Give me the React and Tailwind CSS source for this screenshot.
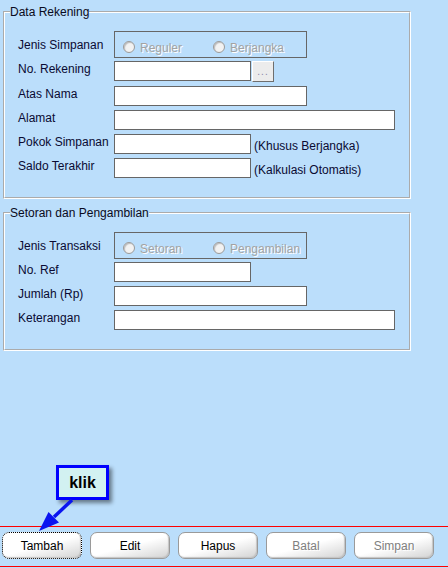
import React from 'react';

const labelCls = 'w-[96px] shrink-0 leading-[16px] text-[#0a0a32]';
const inputCls = 'h-[20px] shrink-0 border border-[#666] bg-white px-[2px] text-[12px] outline-none';

function Radio({ label, wide }) {
  return (
    <div className={`flex items-start gap-[5px] ${wide ? 'w-[90px]' : ''}`}>
      <span className="mt-[1px] h-[12px] w-[12px] shrink-0 rounded-full border border-[#9a9a9a] bg-[#f2f2f2] shadow-[inset_1px_1px_1px_#bdbdbd]" />
      <span className="leading-[16px] text-[#a3a3a3] [text-shadow:1px_1px_0_#fff]">{label}</span>
    </div>
  );
}

function RadioRow({ label, a, b }) {
  return (
    <div className="flex h-[27px] items-start">
      <span className={`${labelCls} pt-[6px]`}>{label}</span>
      <div className="flex h-[27px] w-[193px] items-start border border-[#666] pl-[8px] pt-[8px]">
        <Radio label={a} wide />
        <Radio label={b} />
      </div>
    </div>
  );
}

function Field({ label, width, hint, browse, first }) {
  return (
    <div className={`flex items-start ${first ? 'mt-[3px]' : 'mt-[4px]'}`}>
      <span className={labelCls}>{label}</span>
      <input className={inputCls} style={{ width }} />
      {browse && (
        <button className="ml-px h-[21px] w-[22px] border border-t-white border-l-white border-r-[#6e6e6e] border-b-[#6e6e6e] bg-[#ececec] text-[10px] leading-[14px] tracking-[1px] text-[#8a86a8]">
          ...
        </button>
      )}
      {hint && <span className="ml-[3px] pt-[4px] leading-[16px] text-[#0a0a32]">{hint}</span>}
    </div>
  );
}

function Group({ title, className, children }) {
  return (
    <fieldset
      className={`ml-[3px] w-[408px] border-2 border-white [border-style:groove] px-[5px] pt-[12px] pb-[19px] ${className}`}
    >
      <legend className="px-0 leading-[14px] text-[#0a0a20]">{title}</legend>
      <div className="pl-[8px]">{children}</div>
    </fieldset>
  );
}

function Btn({ children, disabled, focused }) {
  return (
    <button
      className={`h-[27px] w-[80px] rounded-[7px] border bg-[linear-gradient(165deg,#ffffff_50%,#d2d2d2)] text-[12px] shadow-[inset_-1px_-1px_1px_#c4c4c4] ${
        focused ? 'border-dotted border-black' : 'border-[#9a9a9a]'
      } ${disabled ? 'text-[#808080] [text-shadow:1px_1px_0_#fff]' : 'text-black'}`}
    >
      {children}
    </button>
  );
}

export default function App() {
  return (
    <div className="relative flex h-[568px] w-[448px] flex-col overflow-hidden bg-[#bbdefb] font-['Liberation_Sans',Arial,sans-serif] text-[12px]">
      <Group title="Data Rekening" className="mt-[5px]">
        <RadioRow label="Jenis Simpanan" a="Reguler" b="Berjangka" />
        <Field label="No. Rekening" width={137} browse first />
        <Field label="Atas Nama" width={193} />
        <Field label="Alamat" width={281} />
        <Field label="Pokok Simpanan" width={137} hint="(Khusus Berjangka)" />
        <Field label="Saldo Terakhir" width={137} hint="(Kalkulasi Otomatis)" />
      </Group>

      <Group title="Setoran dan Pengambilan" className="mt-[7px]">
        <RadioRow label="Jenis Transaksi" a="Setoran" b="Pengambilan" />
        <Field label="No. Ref" width={137} first />
        <Field label="Jumlah (Rp)" width={193} />
        <Field label="Keterangan" width={281} />
      </Group>

      <div className="mt-auto mb-px flex h-[41px] gap-[8px] border-y border-[#ff0000] pl-[2px] pt-[5px]">
        <Btn focused>Tambah</Btn>
        <Btn>Edit</Btn>
        <Btn>Hapus</Btn>
        <Btn disabled>Batal</Btn>
        <Btn disabled>Simpan</Btn>
      </div>

      {/* callout */}
      <div className="absolute left-[56px] top-[465px] flex h-[35px] w-[53px] items-center justify-center border-[3px] border-[#0000ff] bg-[#d2f1f1] text-[16px] font-bold text-black shadow-[3px_3px_4px_rgba(0,0,0,0.45)]">
        klik
      </div>
      <svg className="pointer-events-none absolute left-0 top-0" width="448" height="568">
        <line x1="72" y1="500" x2="54" y2="517" stroke="#0a14f0" strokeWidth="3.5" />
        <polygon points="39,531 48.5,512 59,522.5" fill="#0a14f0" />
      </svg>
    </div>
  );
}
